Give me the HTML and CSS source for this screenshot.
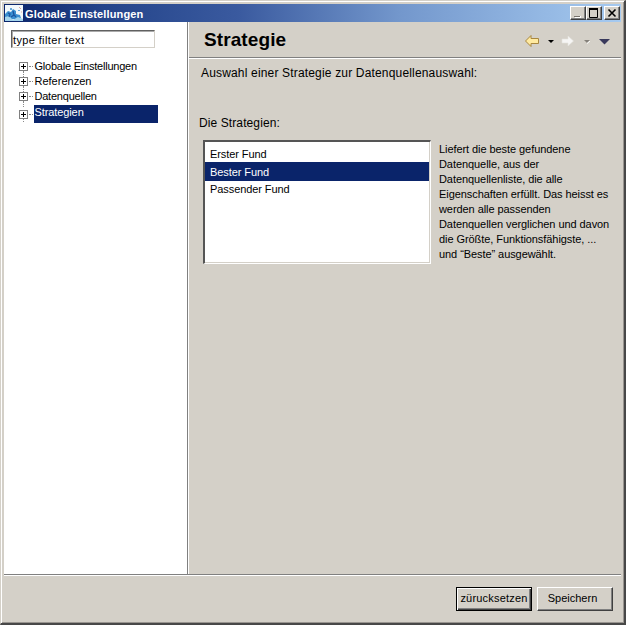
FILE: index.html
```html
<!DOCTYPE html>
<html lang="de">
<head>
<meta charset="utf-8">
<title>Globale Einstellungen</title>
<link rel="stylesheet" href="styles.css">
</head>
<body>
<div class="window">
  <header class="titlebar">
    <svg class="app-icon" width="18" height="16" viewBox="0 0 18 16">
      <rect width="18" height="16" fill="#f2f8fb"/>
      <path d="M0 9l3-3 3 1 2-3 3 2v3l4 1 1 3-4 2-4-1-3 1-5-2z" fill="#3a8fd0"/>
      <path d="M0 12l4-1 4 4 5-3 5 2v2H0z" fill="#a4d4ec"/>
      <path d="M3 8l2 1-1 3M8 6l1 4 2 2M6 12l3-2" fill="none" stroke="#1a55a0" stroke-width="1.3"/>
      <path d="M5 3h2v2H5zM13 5h2v1h-2z" fill="#6aa9d9"/>
      <path d="M14 2l2 2M16 7h1" stroke="#d9a9a0"/>
    </svg>
    <span class="window-title">Globale Einstellungen</span>
    <div class="window-buttons">
      <button class="caption-button"><svg width="14" height="12"><path d="M4 10h6" stroke="#fff" stroke-width="2"/><path d="M3 9.500h6" stroke="#77736d"/></svg></button>
      <button class="caption-button"><svg width="14" height="12"><path d="M2.500 2v8.500h8V2" fill="none" stroke="#000"/><path d="M2 2h9" stroke="#000" stroke-width="2"/></svg></button>
      <button class="caption-button close"><svg width="14" height="12"><path d="M3.500 2.500l7 7M10.500 2.500l-7 7" stroke="#000" stroke-width="1.6"/></svg></button>
    </div>
  </header>
  <div class="main">
    <nav class="sidebar">
      <div class="filter">type filter text</div>
      <ul class="tree">
        <li><i class="expander"></i><span>Globale Einstellungen</span></li>
        <li><i class="expander"></i><span class="references">Referenzen</span></li>
        <li><i class="expander"></i><span>Datenquellen</span></li>
        <li class="selected"><i class="expander"></i><span>Strategien</span></li>
      </ul>
    </nav>
    <section class="page">
      <div class="page-header">
        <h1>Strategie</h1>
        <svg class="history" width="90" height="16" viewBox="0 0 90 16">
          <path d="M1.500 8L7 2.500v3h7.500v5H7v3z" fill="#ffeaa0" stroke="#a88740"/>
          <path d="M24 7h6l-3 3z" fill="#000"/>
          <path d="M38 6h6V3l5.500 5-5.500 5v-3h-6z" fill="#f6f5f4" stroke="#e4e2de" stroke-width=".6"/>
          <path d="M60 7h6l-3 3z" fill="#85817b"/><path d="M63 10.500L66 8" stroke="#fff"/>
          <path d="M75 6h11l-5.500 5.500z" fill="#39395c"/>
        </svg>
      </div>
      <div class="page-body">
        <p class="intro">Auswahl einer Strategie zur Datenquellenauswahl:</p>
        <p class="list-label">Die Strategien:</p>
        <div class="columns">
          <ul class="list">
            <li>Erster Fund</li>
            <li class="selected">Bester Fund</li>
            <li>Passender Fund</li>
          </ul>
          <p class="description">Liefert die beste gefundene<br>Datenquelle, aus der<br>Datenquellenliste, die alle<br>Eigenschaften erfüllt. Das heisst es<br>werden alle passenden<br>Datenquellen verglichen und davon<br>die Größte, Funktionsfähigste, ...<br>und “Beste” ausgewählt.</p>
        </div>
      </div>
    </section>
  </div>
  <footer class="actions">
    <button class="action default">zürucksetzen</button>
    <button class="action save">Speichern</button>
  </footer>
</div>
</body>
</html>
```
FILE: styles.css
```css
* { box-sizing: border-box; }
body {
  margin: 0;
  background: #d4d0c8;
  color: #000;
  font: 11px/15px "Liberation Sans", Arial, sans-serif;
}
ul, p, h1 { margin: 0; padding: 0; list-style: none; }
button { font: inherit; color: inherit; padding: 0; margin: 0; border-radius: 0; }
.window {
  width: 626px;
  height: 625px;
  display: flex;
  flex-direction: column;
  padding: 3px 3px 1px 2px;
  border: solid;
  border-width: 1px 2px 2px 1px;
  border-color: #d4d0c8 #484848 #484848 #d4d0c8;
  box-shadow: inset 1px 1px #fff, inset -1px -1px #999590;
}
.titlebar {
  height: 18px;
  margin-left: 1px;
  display: flex;
  align-items: center;
  flex: none;
  padding: 0 1px;
  background: linear-gradient(90deg, #0a246a, #24448a 16%, #3a5a9f 38%, #7397cc 64%, #a6caf0);
}
.app-icon { flex: none; }
.window-title { margin-left: 2px; color: #fff; font-weight: bold; white-space: nowrap; padding-top: 2px; letter-spacing: .14px; }
.window-buttons { display: flex; margin-left: auto; }
.caption-button {
  width: 16px;
  height: 14px;
  background: #d4d0c8;
  border: 1px solid;
  border-color: #fff #404040 #404040 #fff;
  box-shadow: inset -1px -1px #808080;
  display: flex;
}
.caption-button svg { flex: none; }
.caption-button.close { margin-left: 2px; }
.main { height: 553px; margin-left: 1px; display: flex; flex: none; border-bottom: 1px solid #808080; }
.sidebar { width: 184px; background: #fff; border-right: 1px solid #808080; padding: 8px 0 0 7px; }
.filter {
  width: 144px;
  height: 18px;
  border: 1px solid;
  border-color: #606060 #d4d0c8 #d4d0c8 #606060;
  box-shadow: inset 1px 1px #aaa;
  padding: 2px 0 0 1px;
  letter-spacing: .37px;
}
.tree { margin-top: 10px; }
.tree li { display: flex; height: 15px; align-items: center; }
.tree li:first-child { height: 16px; }
.tree span { flex: none; width: 124px; line-height: 15px; letter-spacing: -.22px; padding-left: .5px; }
.tree .references { letter-spacing: 0; }
.tree .selected { height: 18px; margin-top: 1px; }
.tree .selected span { background: #0a246a; color: #fff; height: 18px; letter-spacing: -.1px; }
.expander {
  flex: none;
  width: 9px;
  height: 9px;
  margin: 0 6px 0 8px;
  border: 1px solid #808080;
  background: linear-gradient(#000, #000) center / 5px 1px no-repeat, linear-gradient(#000, #000) center / 1px 5px no-repeat;
  position: relative;
}
.expander::before { content: ""; position: absolute; left: 3px; top: 8px; height: 6px; border-left: 1px dotted #888; }
.tree .selected .expander::before { height: 3px; }
.expander::after { content: ""; position: absolute; left: 9px; top: 3px; width: 4px; border-top: 1px dotted #888; }
.page { flex: 1; border-left: 1px solid #fff; min-width: 0; }
.page-header {
  height: 36px;
  border-bottom: 1px solid #808080;
  box-shadow: 0 1px #fff;
  display: flex;
  align-items: center;
  justify-content: space-between;
  padding: 1px 7px 0 15px;
}
h1 { font-size: 19px; line-height: 24px; letter-spacing: .1px; }
.history { margin-top: 1px; }
.page-body { padding: 7px 0 0 10px; }
.intro { font-size: 12px; line-height: 16px; padding-left: 2px; letter-spacing: .17px; }
.list-label { font-size: 12px; line-height: 16px; margin-top: 34px; letter-spacing: .1px; }
.columns { display: flex; margin-top: 9px; padding-left: 4px; }
.list {
  width: 228px;
  height: 124px;
  background: #fff;
  border: solid;
  border-width: 2px 1px 1px 2px;
  border-color: #555 #fff #fff #555;
  box-shadow: inset -1px -1px #d4d0c8;
  padding-top: 2px;
}
.list li { height: 18px; line-height: 20px; padding-left: 5px; letter-spacing: -.08px; }
.list .selected { background: #0a246a; color: #fff; height: 19px; margin-right: 1px; }
.list .selected + li { line-height: 17px; }
.description { margin-left: 8px; white-space: nowrap; padding-top: 2px; letter-spacing: -.07px; }
.actions {
  flex: 1;
  margin-left: 1px;
  border-top: 1px solid #fff;
  display: flex;
  padding: 11px 0 0 452px;
  gap: 5px;
}
.action {
  width: 76px;
  height: 24px;
  padding-bottom: 2px;
  background: #d4d0c8;
  border: 1px solid;
  border-color: #fff #404040 #404040 #fff;
  box-shadow: inset -1px -1px #808080;
  white-space: nowrap;
}
.action.default { letter-spacing: .2px; border-color: #000; box-shadow: inset 1px 1px #fff, inset -1px -1px #404040, inset -2px -2px #808080; }
.action.save { padding-right: 5px; }
```
